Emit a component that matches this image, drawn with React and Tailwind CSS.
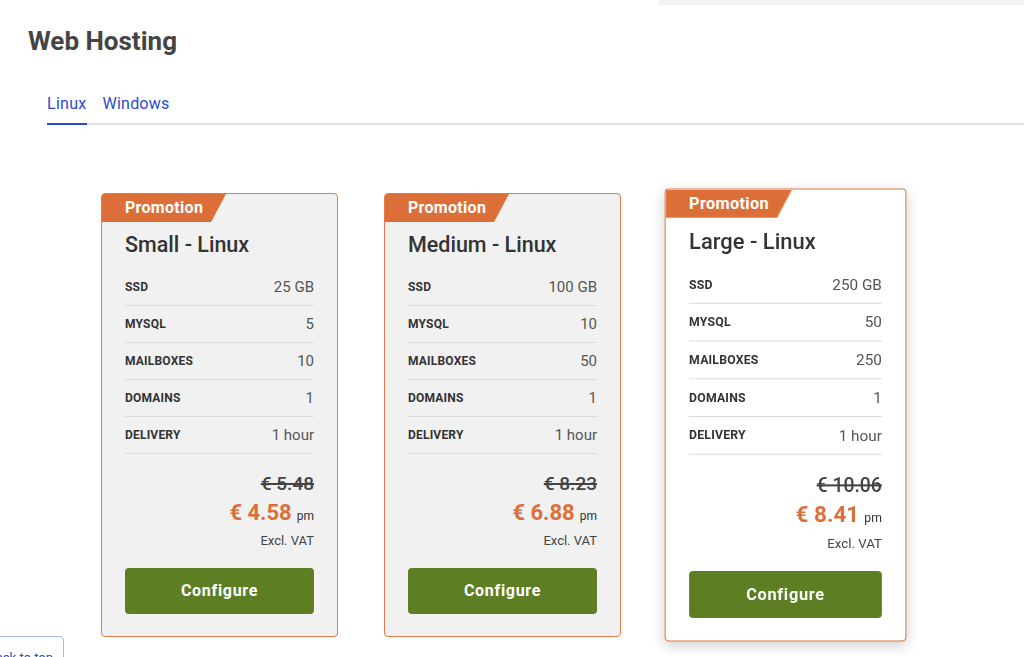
import React from "react";

const plans = [
  {
    name: "Small - Linux",
    specs: [
      ["SSD", "25 GB"],
      ["MYSQL", "5"],
      ["MAILBOXES", "10"],
      ["DOMAINS", "1"],
      ["DELIVERY", "1 hour"],
    ],
    oldPrice: "€ 5.48",
    price: "€ 4.58",
  },
  {
    name: "Medium - Linux",
    specs: [
      ["SSD", "100 GB"],
      ["MYSQL", "10"],
      ["MAILBOXES", "50"],
      ["DOMAINS", "1"],
      ["DELIVERY", "1 hour"],
    ],
    oldPrice: "€ 8.23",
    price: "€ 6.88",
  },
  {
    name: "Large - Linux",
    specs: [
      ["SSD", "250 GB"],
      ["MYSQL", "50"],
      ["MAILBOXES", "250"],
      ["DOMAINS", "1"],
      ["DELIVERY", "1 hour"],
    ],
    oldPrice: "€ 10.06",
    price: "€ 8.41",
    active: true,
  },
];

function PlanCard({ plan }) {
  return (
    <div
      className={
        plan.active
          ? "flex flex-col w-[237px] h-[444px] border border-[#e27b45] rounded-[4px] bg-white scale-[1.02] shadow-[0_4px_12px_rgba(0,0,0,0.18)]"
          : "flex flex-col w-[237px] h-[444px] border border-[#e27b45] rounded-[4px] bg-[#f1f1f1]"
      }
    >
      <div className="flex">
        <div className="h-[28px] w-[124px] bg-[#dc6f38] [clip-path:polygon(0_0,100%_0,88%_100%,0_100%)] pl-[23px] flex items-center rounded-tl-[3px]">
          <span className="text-white font-bold text-[16px] tracking-[0.3px]">Promotion</span>
        </div>
      </div>
      <div className="flex flex-col px-[23px] pb-[22px] flex-1">
        <h2 className="mt-[9px] h-[28px] leading-[28px] text-[21.5px] font-medium text-[#333]">{plan.name}</h2>
        <div className="mt-[10px] flex flex-col">
          {plan.specs.map(([label, value]) => (
            <div
              key={label}
              className="h-[37px] flex items-center justify-between border-b border-[#dcdcdc]"
            >
              <span className="text-[12px] font-bold text-[#333] tracking-[0.2px]">{label}</span>
              <span className="text-[15px] text-[#555]">{value}</span>
            </div>
          ))}
        </div>
        <div className="mt-[18px] flex flex-col items-end">
          <span className="text-[19px] leading-[24px] font-medium text-[#444] line-through decoration-[1.5px]">
            {plan.oldPrice}
          </span>
          <div className="flex items-baseline mt-[3px] h-[28px]">
            <span className="text-[22px] leading-[28px] font-bold text-[#dc6f38]">{plan.price}</span>
            <span className="ml-[5px] text-[12px] text-[#333]">pm</span>
          </div>
          <span className="mt-[5px] text-[13px] leading-[18px] text-[#444]">Excl. VAT</span>
        </div>
        <button className="mt-auto h-[46px] w-full rounded-[4px] bg-[#5e7e24] text-white font-bold text-[16px] tracking-[0.7px]">
          Configure
        </button>
      </div>
    </div>
  );
}

export default function App() {
  return (
    <div className="relative w-[1024px] h-[657px] overflow-hidden bg-white font-['Roboto','Liberation_Sans',sans-serif]">
      <div className="flex justify-end">
        <div className="w-[365px] h-[5px] bg-[#f2f2f2]"></div>
      </div>
      <div className="pl-[28px]">
        <h1 className="mt-[19px] text-[26px] leading-[34px] font-bold text-[#444]">Web Hosting</h1>
        <div className="mt-[34px] ml-[19px] flex border-b-2 border-[#e2e2e2]">
          <div className="pb-[7px] border-b-2 border-[#2a4bd0] -mb-[2px] text-[16px] leading-[24px] tracking-[0.3px] text-[#2a4bd0]">Linux</div>
          <div className="pb-[7px] ml-[16px] text-[16px] leading-[24px] tracking-[0.2px] text-[#2a4bd0]">Windows</div>
        </div>
        <div className="mt-[68px] ml-[73px] flex gap-[46px]">
          {plans.map((p) => (
            <PlanCard key={p.name} plan={p} />
          ))}
        </div>
      </div>
      <div className="absolute left-[-60px] top-[636px] w-[124px] h-[36px] border border-[#a9b8e0] rounded-[4px] bg-white flex items-start justify-end pr-[10px] pt-[11px]">
        <span className="text-[13px] text-[#2a4bd0]">Back to top</span>
      </div>
    </div>
  );
}
